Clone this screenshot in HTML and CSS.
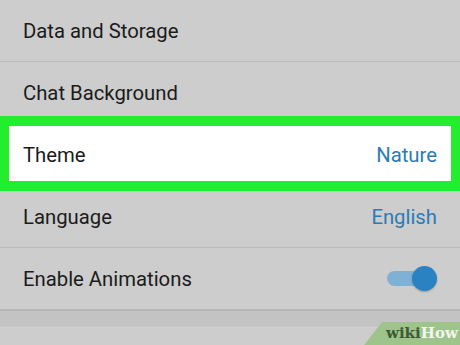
FILE: index.html
```html
<!DOCTYPE html>
<html lang="en">
<head>
    <meta charset="UTF-8">
    <meta name="viewport" content="width=device-width, initial-scale=1.0">
    <title>Settings</title>
    <link rel="stylesheet" href="styles.css">
</head>
<body>

    <div class="settings">
        <div class="row first"><span class="label">Data and Storage</span></div>
        <div class="row"><span class="label">Chat Background</span></div>
        <div class="row selected">
            <span class="label">Theme</span>
            <span class="value">Nature</span>
        </div>
        <div class="row">
            <span class="label">Language</span>
            <span class="value">English</span>
        </div>
        <div class="row last">
            <span class="label">Enable Animations</span>
            <span class="toggle"><span class="thumb"></span></span>
        </div>
        <div class="band"></div>
    </div>

    <div class="badge"><span class="wiki">wiki</span><span class="how">How</span></div>

</body>
</html>
```

FILE: styles.css
```css
body {
    margin: 0;
    background-color: #cdcdcd;
    font-family: Roboto, "Liberation Sans", sans-serif;
    overflow: hidden;
    height: 345px;
    position: relative;
}
.row {
    height: 61px;
    display: flex;
    align-items: center;
    justify-content: space-between;
    padding: 0 23px;
    border-bottom: 1px solid #bababa;
    font-size: 20.3px;
}
.label {
    color: #1b1b1b;
}
.value {
    color: #2c7bb4;
}
.selected {
    position: relative;
    background-color: #ffffff;
    border-bottom-color: #ffffff;
}
.selected::after {
    content: "";
    position: absolute;
    top: -8px;
    bottom: -6px;
    left: 0;
    right: 0;
    border: 9px solid #22ee2e;
    border-top-width: 10px;
    border-bottom-width: 10px;
}
.last {
    border-bottom: 2px solid #b6b6b6;
}
.toggle {
    position: relative;
    width: 33px;
    height: 15px;
    border-radius: 8px;
    background-color: #7fb1d5;
    margin-right: 17px;
}
.thumb {
    position: absolute;
    right: -17px;
    top: -5px;
    width: 25px;
    height: 25px;
    border-radius: 50%;
    background-color: #2a82c3;
    box-shadow: 0 1px 2px rgba(0,0,0,0.25);
}
.band {
    height: 15px;
    background-color: #c3c3c3;
    border-bottom: 1px solid #c8c8c8;
}
.badge {
    position: absolute;
    right: 0;
    bottom: 0;
    width: 96px;
    height: 23px;
    background-color: #9fc48b;
    clip-path: polygon(18px 0, 100% 0, 100% 100%, 0 100%);
    font-family: "DejaVu Serif", serif;
    font-weight: bold;
    font-size: 15px;
    line-height: 23px;
    padding-left: 22px;
    box-sizing: border-box;
}
.wiki {
    color: #3e5a34;
}
.how {
    color: #f2f6ee;
}
```
